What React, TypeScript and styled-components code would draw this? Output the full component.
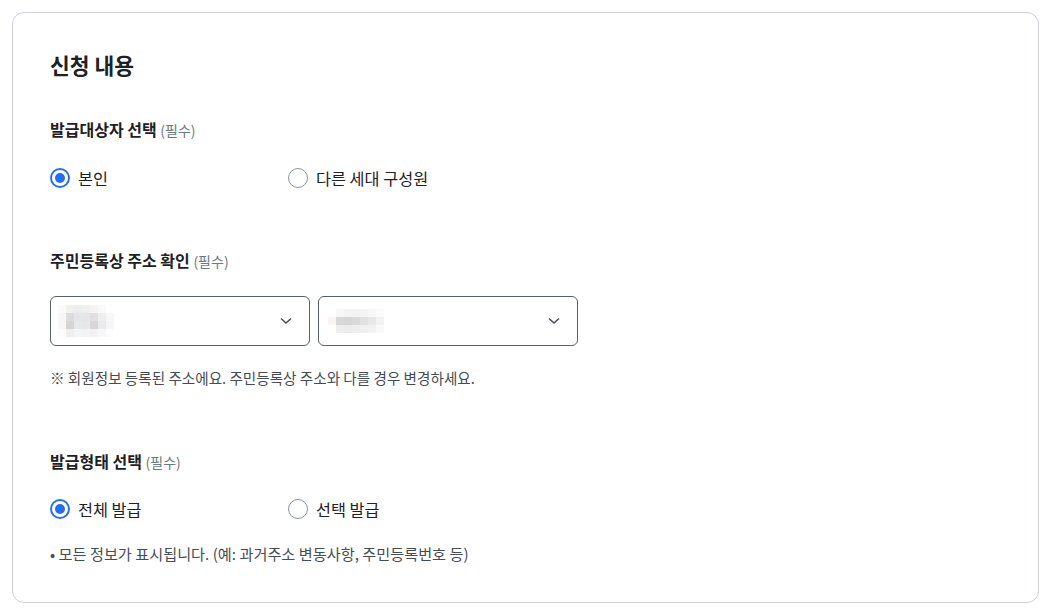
import React from "react";
import styled, { createGlobalStyle } from "styled-components";

const GlobalStyle = createGlobalStyle`
  body {
    margin: 0;
    background: #ffffff;
    font-family: "Noto Sans CJK KR", "Noto Sans", sans-serif;
    color: #1e2124;
  }
`;

const colors = {
  text: "#1e2124",
  sub: "#6d7882",
  note: "#464c53",
  border: "#cdd1d5",
  field: "#58616a",
  primary: "#256ef4",
  radioOff: "#8a949e",
};

const Page = styled.div`
  padding: 12px 13px 12px 12px;
`;

const Card = styled.section`
  border: 1px solid ${colors.border};
  border-radius: 12px;
  padding: 38px 36px 39px 37px;
  display: flex;
  flex-direction: column;
`;

const Title = styled.h2`
  margin: 0;
  font-size: 21.5px;
  line-height: 28px;
  font-weight: 700;
  color: ${colors.text};
`;

const Label = styled.div<{ $gap: number }>`
  margin-top: ${(p) => p.$gap}px;
  font-size: 16px;
  line-height: 22px;
  font-weight: 700;
  color: ${colors.text};
`;

const Required = styled.span`
  font-size: 14px;
  font-weight: 400;
  color: ${colors.sub};
`;

const RadioRow = styled.div<{ $gap: number }>`
  margin-top: ${(p) => p.$gap}px;
  display: flex;
  height: 24px;
  align-items: center;
`;

const RadioOption = styled.label`
  width: 238px;
  display: flex;
  align-items: center;
  gap: 8px;
  font-size: 16.3px;
  color: ${colors.text};
  cursor: pointer;
`;

const RadioCircle = styled.span<{ $checked: boolean }>`
  box-sizing: border-box;
  width: 20px;
  height: 20px;
  border-radius: 50%;
  border: ${(p) =>
    p.$checked ? `2px solid ${colors.primary}` : `1.5px solid ${colors.radioOff}`};
  display: flex;
  align-items: center;
  justify-content: center;
  &::after {
    content: "";
    display: ${(p) => (p.$checked ? "block" : "none")};
    width: 10px;
    height: 10px;
    border-radius: 50%;
    background: ${colors.primary};
  }
`;

const SelectRow = styled.div`
  margin-top: 24px;
  display: flex;
  gap: 8px;
`;

const SelectBox = styled.div`
  box-sizing: border-box;
  width: 260px;
  height: 50px;
  border: 1px solid ${colors.field};
  border-radius: 6px;
  display: flex;
  align-items: center;
  justify-content: space-between;
  padding: 0 17px 0 7px;
`;

const Note = styled.p<{ $gap: number; $size: number }>`
  margin: ${(p) => p.$gap}px 0 0;
  font-size: ${(p) => p.$size}px;
  line-height: 20px;
  color: ${colors.note};
`;

type MosaicProps = { cells: string[][]; left: number };

const Mosaic = ({ cells, left }: MosaicProps) => (
  <svg
    width={cells[0].length * 8 + left}
    height={cells.length * 8}
    viewBox={`0 0 ${cells[0].length * 8 + left} ${cells.length * 8}`}
  >
    {cells.map((row, r) =>
      row.map((c, i) => (
        <rect key={`${r}-${i}`} x={left + i * 8} y={r * 8} width={8} height={8} fill={c} />
      ))
    )}
  </svg>
);

const Chevron = () => (
  <svg width="12" height="8" viewBox="0 0 12 8">
    <path d="M1 1.5 L6 6 L11 1.5" fill="none" stroke="#464c53" strokeWidth="1.5" />
  </svg>
);

const mosaicA = [
  ["#fafafa", "#f0f0f0", "#eeeeee", "#f0f0f0", "#f4f4f4", "#fafafa", "#ffffff", "#ffffff"],
  ["#f6f6f6", "#dcdcdc", "#e4e6e9", "#e3e5e6", "#e2e0e1", "#eceef0", "#f8f8f8", "#ffffff"],
  ["#f7f7f7", "#d6d4d4", "#e6e8ea", "#e5e7e8", "#d7d5d6", "#e8eaec", "#f6f6f6", "#ffffff"],
  ["#fcfcfc", "#eeeeee", "#f4f4f5", "#f3f3f4", "#f1f1f1", "#f6f6f6", "#fcfcfc", "#ffffff"],
];

const mosaicB = [
  ["#ffffff", "#f6f6f6", "#f3f3f3", "#f3f3f3", "#f4f4f4", "#f7f7f7", "#fbfbfb", "#ffffff"],
  ["#fbf3ee", "#d7d7d7", "#d5d5d5", "#d9d9d9", "#e1e1e1", "#e8e8e8", "#f3f3f3", "#ffffff"],
  ["#ffffff", "#eeeeee", "#ececec", "#eeeeee", "#efefef", "#f2f2f2", "#f8f8f8", "#ffffff"],
];

type Option = { label: string; checked: boolean };

const RadioGroup = ({ options, gap }: { options: Option[]; gap: number }) => (
  <RadioRow $gap={gap}>
    {options.map((o) => (
      <RadioOption key={o.label}>
        <RadioCircle $checked={o.checked} />
        {o.label}
      </RadioOption>
    ))}
  </RadioRow>
);

export default function App() {
  return (
    <>
      <GlobalStyle />
      <Page>
        <Card>
          <Title>신청 내용</Title>

          <Label $gap={39}>
            발급대상자 선택 <Required>(필수)</Required>
          </Label>
          <RadioGroup
            gap={25}
            options={[
              { label: "본인", checked: true },
              { label: "다른 세대 구성원", checked: false },
            ]}
          />

          <Label $gap={59}>
            주민등록상 주소 확인 <Required>(필수)</Required>
          </Label>
          <SelectRow>
            <SelectBox>
              <Mosaic cells={mosaicA} left={0} />
              <Chevron />
            </SelectBox>
            <SelectBox>
              <Mosaic cells={mosaicB} left={2} />
              <Chevron />
            </SelectBox>
          </SelectRow>
          <Note $gap={22} $size={14.6}>
            ※ 회원정보 등록된 주소에요. 주민등록상 주소와 다를 경우 변경하세요.
          </Note>

          <Label $gap={62}>
            발급형태 선택 <Required>(필수)</Required>
          </Label>
          <RadioGroup
            gap={24}
            options={[
              { label: "전체 발급", checked: true },
              { label: "선택 발급", checked: false },
            ]}
          />
          <Note $gap={22} $size={15.2}>
            • 모든 정보가 표시됩니다. (예: 과거주소 변동사항, 주민등록번호 등)
          </Note>
        </Card>
      </Page>
    </>
  );
}
